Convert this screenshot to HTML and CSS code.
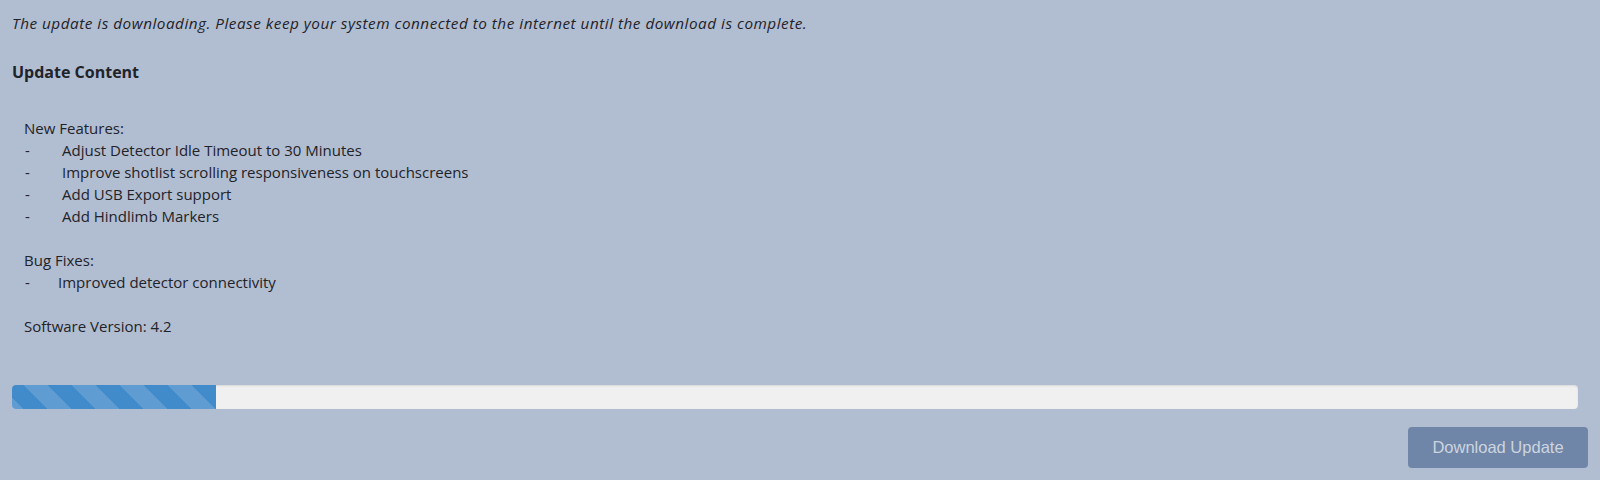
FILE: index.html
```html
<!DOCTYPE html>
<html>
<head>
<meta charset="utf-8">
<link rel="stylesheet" href="styles.css">
</head>
<body>
<div class="page">
  <p class="notice">The update is downloading. Please keep your system connected to the internet until the download is complete.</p>
  <h3 class="heading">Update Content</h3>
  <div class="content">
    <div class="line">New Features:</div>
    <div class="line"><span class="dash">-</span>Adjust Detector Idle Timeout to 30 Minutes</div>
    <div class="line"><span class="dash">-</span>Improve shotlist scrolling responsiveness on touchscreens</div>
    <div class="line"><span class="dash">-</span>Add USB Export support</div>
    <div class="line"><span class="dash">-</span>Add Hindlimb Markers</div>
    <div class="line blank"></div>
    <div class="line">Bug Fixes:</div>
    <div class="line"><span class="dash short">-</span>Improved detector connectivity</div>
    <div class="line blank"></div>
    <div class="line">Software Version: 4.2</div>
  </div>
  <div class="progress">
    <div class="progress-bar" style="width: 13%"></div>
  </div>
  <div class="actions">
    <button class="btn" disabled>Download Update</button>
  </div>
</div>
</body>
</html>
```

FILE: styles.css
```css
html, body {
  margin: 0;
  padding: 0;
  height: 100%;
}
body {
  background: #b1bdd0;
  color: #1f232a;
  font-family: "Open Sans", "Noto Sans", sans-serif;
  font-size: 15px;
}
.page {
  padding: 12px 12px 0 12px;
}
.notice {
  margin: 0;
  font-style: italic;
  font-size: 15.3px;
  letter-spacing: 0.5px;
  line-height: 22px;
}
.heading {
  margin: 27px 0 0;
  font-size: 16px;
  font-weight: 700;
  line-height: 22px;
}
.content {
  margin-top: 34px;
  padding-left: 12px;
}
.line {
  line-height: 22px;
  height: 22px;
  white-space: nowrap;
}
.dash {
  display: inline-block;
  width: 38px;
  padding-left: 1px;
  box-sizing: border-box;
}
.dash.short {
  width: 34px;
}
.progress {
  margin: 48px 10px 0 0;
  height: 24px;
  border-radius: 4px;
  background: #f0f0f0;
  box-shadow: inset 0 1px 2px rgba(0, 0, 0, 0.1);
  overflow: hidden;
  display: flex;
}
.progress-bar {
  height: 100%;
  background-color: #428bca;
  background-image: linear-gradient(45deg,
    rgba(255, 255, 255, 0.15) 25%, transparent 25%,
    transparent 50%, rgba(255, 255, 255, 0.15) 50%,
    rgba(255, 255, 255, 0.15) 75%, transparent 75%, transparent);
  background-size: 48px 48px;
  background-position: 12px 0;
}
.actions {
  display: flex;
  justify-content: flex-end;
  margin-top: 18px;
}
.btn {
  height: 41px;
  width: 180px;
  border: none;
  border-radius: 4px;
  background: #6f86a8;
  color: #cdd4df;
  font-family: "Liberation Sans", Arial, sans-serif;
  font-size: 16.5px;
  padding: 0;
}
```
